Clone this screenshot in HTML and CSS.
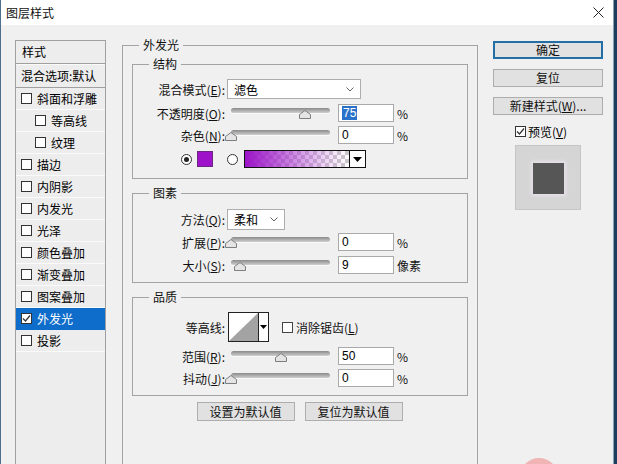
FILE: index.html
```html
<!DOCTYPE html>
<html lang="zh-CN">
<head>
<meta charset="utf-8">
<title>图层样式</title>
<link rel="stylesheet" href="styles.css">
</head>
<body>
<div class="window">
  <div class="titlebar">
    <span class="title">图层样式</span>
    <svg class="close" width="11" height="11" viewBox="0 0 11 11"><path d="M0.5 0.5 L10.5 10.5 M10.5 0.5 L0.5 10.5" stroke="#222" stroke-width="1" fill="none"/></svg>
  </div>
  <div class="content">
    <div class="stylelist">
      <div class="list-head">样式</div>
      <div class="list-blend">混合选项:默认</div>
      <div class="list-item"><span class="cb"></span>斜面和浮雕</div>
      <div class="list-item sub"><span class="cb"></span>等高线</div>
      <div class="list-item sub"><span class="cb"></span>纹理</div>
      <div class="list-item"><span class="cb"></span>描边</div>
      <div class="list-item"><span class="cb"></span>内阴影</div>
      <div class="list-item"><span class="cb"></span>内发光</div>
      <div class="list-item"><span class="cb"></span>光泽</div>
      <div class="list-item"><span class="cb"></span>颜色叠加</div>
      <div class="list-item"><span class="cb"></span>渐变叠加</div>
      <div class="list-item"><span class="cb"></span>图案叠加</div>
      <div class="list-item selected"><span class="cb"><svg width="9" height="9" viewBox="0 0 9 9"><path d="M1 4.5 L3.5 7 L8 1.5" stroke="#333" stroke-width="1.2" fill="none"/></svg></span>外发光</div>
      <div class="list-item"><span class="cb"></span>投影</div>
    </div>

    <fieldset class="group outer">
      <legend>外发光</legend>

      <fieldset class="group sect sect-struct">
        <legend>结构</legend>
        <div class="row r-sel">
          <span class="lbl">混合模式(<u>E</u>):</span>
          <div class="select sel-wide"><span>滤色</span><svg width="8" height="5" viewBox="0 0 8 5"><path d="M0.5 0.5 L4 4 L7.5 0.5" stroke="#666" fill="none"/></svg></div>
        </div>
        <div class="row r-sl gap4">
          <span class="lbl">不透明度(<u>O</u>):</span>
          <div class="slider"><div class="track"></div><svg class="thumb" style="left:72px" width="12" height="9" viewBox="0 0 12 9"><path d="M0.5 8.5 L0.5 4.5 L6 0.5 L11.5 4.5 L11.5 8.5 Z" fill="#e4e4e4" stroke="#7e7e7e"/></svg></div>
          <div class="num"><span class="hl">75</span></div>
          <span class="unit">%</span>
        </div>
        <div class="row r-sl gap6">
          <span class="lbl">杂色(<u>N</u>):</span>
          <div class="slider"><div class="track"></div><svg class="thumb" style="left:-2px" width="12" height="9" viewBox="0 0 12 9"><path d="M0.5 8.5 L0.5 4.5 L6 0.5 L11.5 4.5 L11.5 8.5 Z" fill="#e4e4e4" stroke="#7e7e7e"/></svg></div>
          <div class="num">0</div>
          <span class="unit">%</span>
        </div>
        <div class="row r-color">
          <span class="radio on"></span>
          <span class="swatch"></span>
          <span class="radio r2"></span>
          <div class="gradient"><span class="gfill"></span><span class="garrow"><svg width="9" height="5" viewBox="0 0 9 5"><path d="M0 0 L9 0 L4.5 5 Z" fill="#000"/></svg></span></div>
        </div>
      </fieldset>

      <fieldset class="group sect sect-elem">
        <legend>图素</legend>
        <div class="row r-sel2">
          <span class="lbl">方法(<u>Q</u>):</span>
          <div class="select sel-small"><span>柔和</span><svg width="8" height="5" viewBox="0 0 8 5"><path d="M0.5 0.5 L4 4 L7.5 0.5" stroke="#666" fill="none"/></svg></div>
        </div>
        <div class="row r-sl gap5">
          <span class="lbl">扩展(<u>P</u>):</span>
          <div class="slider"><div class="track"></div><svg class="thumb" style="left:-2px" width="12" height="9" viewBox="0 0 12 9"><path d="M0.5 8.5 L0.5 4.5 L6 0.5 L11.5 4.5 L11.5 8.5 Z" fill="#e4e4e4" stroke="#7e7e7e"/></svg></div>
          <div class="num">0</div>
          <span class="unit">%</span>
        </div>
        <div class="row r-sl">
          <span class="lbl">大小(<u>S</u>):</span>
          <div class="slider"><div class="track"></div><svg class="thumb" style="left:7px" width="12" height="9" viewBox="0 0 12 9"><path d="M0.5 8.5 L0.5 4.5 L6 0.5 L11.5 4.5 L11.5 8.5 Z" fill="#e4e4e4" stroke="#7e7e7e"/></svg></div>
          <div class="num">9</div>
          <span class="unit">像素</span>
        </div>
      </fieldset>

      <fieldset class="group sect sect-qual">
        <legend>品质</legend>
        <div class="row r-contour">
          <span class="lbl">等高线:</span>
          <div class="contour">
            <svg width="29" height="28" viewBox="0 0 29 28"><rect width="29" height="28" fill="#fff"/><path d="M0 28 L29 0 L29 28 Z" fill="#a3a3a3"/></svg>
            <span class="carrow"><svg width="7" height="4" viewBox="0 0 7 4"><path d="M0 0 L7 0 L3.5 4 Z" fill="#000"/></svg></span>
          </div>
          <span class="cb cb-anti"></span>
          <span class="cb-text">消除锯齿(<u>L</u>)</span>
        </div>
        <div class="row r-sl gap4">
          <span class="lbl">范围(<u>R</u>):</span>
          <div class="slider"><div class="track"></div><svg class="thumb" style="left:48px" width="12" height="9" viewBox="0 0 12 9"><path d="M0.5 8.5 L0.5 4.5 L6 0.5 L11.5 4.5 L11.5 8.5 Z" fill="#e4e4e4" stroke="#7e7e7e"/></svg></div>
          <div class="num">50</div>
          <span class="unit">%</span>
        </div>
        <div class="row r-sl">
          <span class="lbl">抖动(<u>J</u>):</span>
          <div class="slider"><div class="track"></div><svg class="thumb" style="left:-2px" width="12" height="9" viewBox="0 0 12 9"><path d="M0.5 8.5 L0.5 4.5 L6 0.5 L11.5 4.5 L11.5 8.5 Z" fill="#e4e4e4" stroke="#7e7e7e"/></svg></div>
          <div class="num">0</div>
          <span class="unit">%</span>
        </div>
      </fieldset>

      <div class="defaults">
        <button class="btn">设置为默认值</button>
        <button class="btn">复位为默认值</button>
      </div>
    </fieldset>

    <div class="side">
      <button class="btn sbtn primary">确定</button>
      <button class="btn sbtn">复位</button>
      <button class="btn sbtn">新建样式(<u>W</u>)...</button>
      <div class="preview-check"><span class="cb"><svg width="9" height="9" viewBox="0 0 9 9"><path d="M1 4.5 L3.5 7 L8 1.5" stroke="#333" stroke-width="1.2" fill="none"/></svg></span>预览(<u>V</u>)</div>
      <div class="preview"><div class="preview-sq"></div></div>
    </div>
  </div>
  <div class="mark"></div>
</div>
</body>
</html>
```

FILE: styles.css
```css
* { box-sizing: border-box; }

body {
  margin: 0;
  width: 617px;
  height: 464px;
  overflow: hidden;
  background: #1d3d5c;
  font-family: "Noto Sans CJK SC", "Microsoft YaHei", sans-serif;
  font-size: 12px;
  color: #000;
}

u { text-decoration: underline; text-underline-offset: 1px; }

.window {
  width: 614px;
  height: 464px;
  border-left: 1px solid #4d6f8c;
  border-right: 1px solid #8aa0b4;
  background: #f0f0f0;
  display: flex;
  flex-direction: column;
  position: relative;
  overflow: hidden;
}

.titlebar {
  height: 25px;
  flex: none;
  background: #fff;
  display: flex;
  align-items: center;
  justify-content: space-between;
  padding: 0 9px 0 5px;
}
.title { line-height: 16px; color: #111; }

.content {
  flex: 1;
  display: flex;
  align-items: flex-start;
  padding-left: 14px;
}

/* ---- style list ---- */
.stylelist {
  width: 91px;
  height: 440px;
  margin-top: 15px;
  border: 1px solid #a0a0a0;
  border-bottom: none;
  background: #ededed;
  flex: none;
}
.list-head {
  height: 23px;
  line-height: 21px;
  padding-left: 6px;
  border-bottom: 1px solid #a0a0a0;
}
.list-blend {
  height: 24px;
  line-height: 22px;
  padding-left: 5px;
  border-top: 1px solid #fafafa;
  border-bottom: 1px solid #a0a0a0;
  white-space: nowrap;
  overflow: hidden;
}
.list-item {
  height: 22px;
  display: flex;
  align-items: center;
  padding-left: 5px;
  border-bottom: 1px solid #fafafa;
  white-space: nowrap;
}
.list-item.sub { padding-left: 19px; }
.list-item.selected { background: #0e6dcb; color: #fff; border-bottom-color: #0e6dcb; }

.cb {
  width: 11px;
  height: 11px;
  border: 1px solid #333;
  background: #fff;
  margin-right: 5px;
  flex: none;
  display: inline-flex;
  align-items: center;
  justify-content: center;
}

/* ---- group boxes ---- */
.group {
  margin: 0;
  padding: 0;
  min-width: 0;
  border: 1px solid #a3a3a3;
}
.group > legend {
  padding: 0 4px;
  margin-left: 16px;
  line-height: 16px;
  height: 16px;
  color: #111;
}

.outer {
  width: 356px;
  height: 440px;
  margin: 12px 0 0 16px;
  flex: none;
}
.sect { margin: 0 9px; }
.sect-struct { margin-top: 3px; padding: 7px 0 10px; }
.sect-elem { margin-top: 6px; padding: 8px 0 8px; }
.sect-qual { margin-top: 6px; padding: 7px 0 8px; }

.row { display: flex; align-items: center; }
.r-sel { height: 20px; margin-bottom: 5px; }
.r-sel2 { height: 21px; margin-bottom: 3px; }
.r-sl { height: 18px; }
.gap4 { margin-bottom: 4px; }
.gap5 { margin-bottom: 5px; }
.gap6 { margin-bottom: 6px; }
.r-color { height: 18px; padding-left: 48px; }
.r-contour { height: 30px; margin-bottom: 5px; }

.lbl {
  width: 92px;
  text-align: right;
  white-space: nowrap;
  color: #111;
  flex: none;
}

.select {
  margin-left: 2px;
  height: 100%;
  border: 1px solid #adadad;
  background: #fff;
  display: flex;
  align-items: center;
  justify-content: space-between;
  padding: 0 6px 0 6px;
}
.sel-wide { width: 134px; }
.sel-small { width: 58px; }

.slider {
  position: relative;
  width: 104px;
  height: 18px;
  margin-left: 2px;
  flex: none;
}
.track {
  margin: 4px 0 0 4px;
  width: 99px;
  height: 5px;
  border-radius: 3px;
  background: linear-gradient(#8a8a8a, #cfcfcf);
  box-shadow: 0 1px 0 #fafafa;
}
.thumb { position: absolute; top: 6px; }

.num {
  width: 56px;
  height: 18px;
  margin-left: 7px;
  border: 1px solid #a9a9a9;
  background: #fff;
  padding-left: 3px;
  line-height: 16px;
  font-family: "Liberation Sans", Arial, sans-serif;
  font-size: 12px;
  flex: none;
}
.hl { background: #2a72c9; color: #fff; padding: 0 1px; }
.unit { margin-left: 3px; color: #111; }

.radio {
  width: 11px;
  height: 11px;
  border-radius: 50%;
  border: 1px solid #333;
  background: #fff;
  flex: none;
  display: inline-flex;
  align-items: center;
  justify-content: center;
}
.radio.on::after {
  content: "";
  width: 5px;
  height: 5px;
  border-radius: 50%;
  background: #222;
}
.swatch {
  width: 16px;
  height: 16px;
  margin-left: 5px;
  background: #9e12c9;
  border: 1px solid #6b2a82;
  flex: none;
}
.r2 { margin-left: 14px; }
.gradient {
  margin-left: 6px;
  height: 18px;
  display: flex;
  border: 1px solid #111;
  background: #fff;
}
.gfill {
  width: 104px;
  height: 100%;
  background:
    linear-gradient(to right, #9c14c8, rgba(200, 120, 225, 0.35) 75%, rgba(255, 255, 255, 0)),
    repeating-conic-gradient(#c9c9c9 0 25%, #fff 0 50%) 0 0 / 8px 8px;
}
.garrow {
  width: 16px;
  height: 100%;
  border-left: 1px solid #111;
  display: flex;
  align-items: center;
  justify-content: center;
}

.contour {
  margin-left: 3px;
  width: 41px;
  height: 30px;
  border: 1px solid #222;
  display: flex;
  background: #fff;
  flex: none;
}
.carrow {
  flex: 1;
  border-left: 1px solid #222;
  display: flex;
  align-items: center;
  justify-content: center;
}
.cb-anti { margin-left: 13px; margin-right: 3px; border-color: #444; }
.cb-text { color: #111; }

.defaults {
  display: flex;
  justify-content: center;
  gap: 10px;
  margin-top: 6px;
  padding-right: 1px;
}

.btn {
  font: inherit;
  color: #111;
  background: #e1e1e1;
  border: 1px solid #adadad;
  height: 19px;
  width: 98px;
  padding: 0;
  line-height: 16px;
}

/* ---- side column ---- */
.side {
  width: 110px;
  margin: 16px 0 0 15px;
  display: flex;
  flex-direction: column;
  align-items: center;
  flex: none;
}
.sbtn { width: 110px; height: 18px; margin-bottom: 10px; }
.primary { border: 2px solid #246ea6; line-height: 14px; }
.preview-check {
  align-self: flex-start;
  margin: 0 0 0 22px;
  display: flex;
  align-items: center;
  height: 12px;
}
.preview-check .cb { margin-right: 2px; }
.preview {
  margin-top: 8px;
  width: 66px;
  height: 65px;
  border: 1px solid #c6c6c6;
  background: #d5d5d5;
  display: flex;
  align-items: center;
  justify-content: center;
}
.preview-sq {
  width: 31px;
  height: 31px;
  background: #565656;
  box-shadow: 0 0 3px 2px #e6dfe9;
  margin-top: 2px;
}

.mark {
  position: absolute;
  left: 519px;
  top: 458px;
  width: 38px;
  height: 38px;
  border-radius: 50%;
  background: #f0b4b4;
}
```
